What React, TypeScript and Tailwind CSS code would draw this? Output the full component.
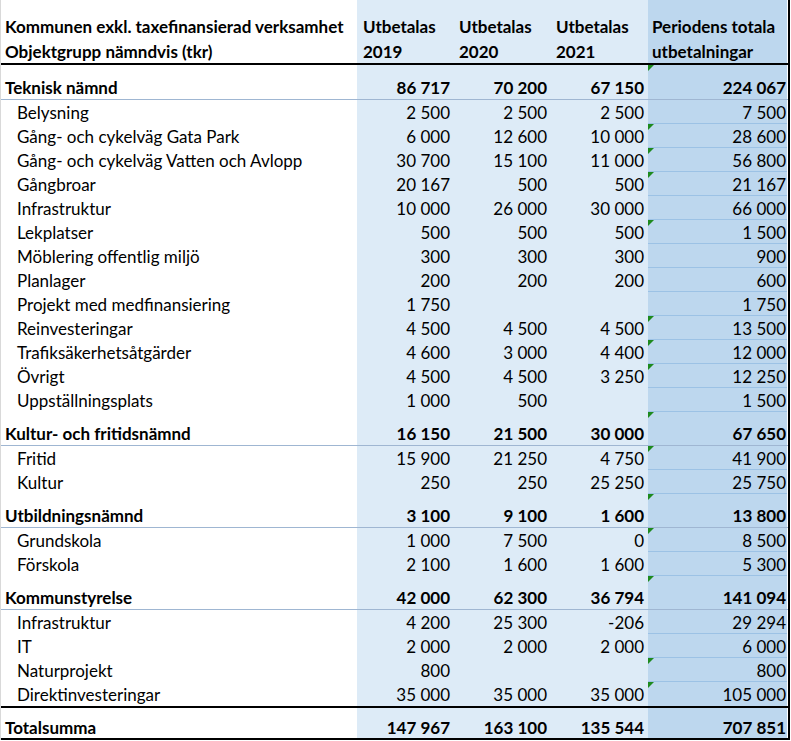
import React from "react";

type Item = { name: string; v: string[]; t?: boolean };
type Group = { name: string; v: string[]; spacerTri?: boolean; spacerH: string; items: Item[] };

const groups: Group[] = [
  {
    name: "Teknisk nämnd",
    v: ["86 717", "70 200", "67 150", "224 067"],
    spacerTri: true,
    spacerH: "h-[11px]",
    items: [
      { name: "Belysning", v: ["2 500", "2 500", "2 500", "7 500"] },
      { name: "Gång- och cykelväg Gata Park", v: ["6 000", "12 600", "10 000", "28 600"], t: true },
      { name: "Gång- och cykelväg Vatten och Avlopp", v: ["30 700", "15 100", "11 000", "56 800"], t: true },
      { name: "Gångbroar", v: ["20 167", "500", "500", "21 167"], t: true },
      { name: "Infrastruktur", v: ["10 000", "26 000", "30 000", "66 000"] },
      { name: "Lekplatser", v: ["500", "500", "500", "1 500"], t: true },
      { name: "Möblering offentlig miljö", v: ["300", "300", "300", "900"] },
      { name: "Planlager", v: ["200", "200", "200", "600"] },
      { name: "Projekt med medfinansiering", v: ["1 750", "", "", "1 750"] },
      { name: "Reinvesteringar", v: ["4 500", "4 500", "4 500", "13 500"], t: true },
      { name: "Trafiksäkerhetsåtgärder", v: ["4 600", "3 000", "4 400", "12 000"], t: true },
      { name: "Övrigt", v: ["4 500", "4 500", "3 250", "12 250"], t: true },
      { name: "Uppställningsplats", v: ["1 000", "500", "", "1 500"] },
    ],
  },
  {
    name: "Kultur- och fritidsnämnd",
    v: ["16 150", "21 500", "30 000", "67 650"],
    spacerTri: true,
    spacerH: "h-[10px]",
    items: [
      { name: "Fritid", v: ["15 900", "21 250", "4 750", "41 900"], t: true },
      { name: "Kultur", v: ["250", "250", "25 250", "25 750"] },
    ],
  },
  {
    name: "Utbildningsnämnd",
    v: ["3 100", "9 100", "1 600", "13 800"],
    spacerTri: true,
    spacerH: "h-[10px]",
    items: [
      { name: "Grundskola", v: ["1 000", "7 500", "0", "8 500"], t: true },
      { name: "Förskola", v: ["2 100", "1 600", "1 600", "5 300"] },
    ],
  },
  {
    name: "Kommunstyrelse",
    v: ["42 000", "62 300", "36 794", "141 094"],
    spacerTri: true,
    spacerH: "h-[10px]",
    items: [
      { name: "Infrastruktur", v: ["4 200", "25 300", "-206", "29 294"] },
      { name: "IT", v: ["2 000", "2 000", "2 000", "6 000"] },
      { name: "Naturprojekt", v: ["800", "", "", "800"], t: true },
      { name: "Direktinvesteringar", v: ["35 000", "35 000", "35 000", "105 000"], t: true },
    ],
  },
];

function Tri() {
  return (
    <span className="absolute left-0 top-0 w-0 h-0 border-t-[6px] border-r-[6px] border-t-[#1e8a1e] border-r-transparent" />
  );
}

const C1 = "w-[356px] shrink-0";
const C2 = "w-[96px] shrink-0 bg-[#ddebf7] text-right pr-[3px]";
const C3 = "w-[97px] shrink-0 bg-[#ddebf7] text-right pr-[3px]";
const C4 = "w-[98px] shrink-0 bg-[#ddebf7] text-right pr-[4px]";
const C5 = "w-[139px] shrink-0 bg-[#bdd7ee] text-right pr-[1px] relative";

function Spacer({ h, tri }: { h: string; tri?: boolean }) {
  return (
    <div className={`flex ${h}`}>
      <div className={C1} />
      <div className={C2} />
      <div className={C3} />
      <div className={C4} />
      <div className={C5}>{tri && <Tri />}</div>
    </div>
  );
}

export default function App() {
  return (
    <div className="bg-white w-[791px] h-[741px] font-[Lato,sans-serif] text-[17px] text-black overflow-hidden">
      <div className="w-[790px] border-l border-l-[#d9d9d9] border-r-2 border-r-black">
        {/* header */}
        <div className="flex h-[65px] font-bold leading-[25px] border-b-2 border-b-black">
          <div className={`${C1} pt-[14px] pl-[4px]`}>
            <div>Kommunen exkl. taxefinansierad verksamhet</div>
            <div>Objektgrupp nämndvis (tkr)</div>
          </div>
          <div className="w-[96px] shrink-0 bg-[#ddebf7] pt-[14px] pl-[6px]">
            <div>Utbetalas</div>
            <div>2019</div>
          </div>
          <div className="w-[97px] shrink-0 bg-[#ddebf7] pt-[14px] pl-[6px]">
            <div>Utbetalas</div>
            <div>2020</div>
          </div>
          <div className="w-[98px] shrink-0 bg-[#ddebf7] pt-[14px] pl-[6px]">
            <div>Utbetalas</div>
            <div>2021</div>
          </div>
          <div className="w-[139px] shrink-0 bg-[#bdd7ee] pt-[14px] pl-[4px]">
            <div>Periodens totala</div>
            <div>utbetalningar</div>
          </div>
        </div>

        {groups.map((g) => (
          <React.Fragment key={g.name}>
            <Spacer h={g.spacerH} tri={g.spacerTri} />
            <div className="flex h-[24px] leading-[20px] font-bold border-b border-b-[#9fb6d2]">
              <div className={`${C1} pl-[4px] pt-[2px]`}>{g.name}</div>
              <div className={`${C2} pt-[2px]`}>{g.v[0]}</div>
              <div className={`${C3} pt-[2px]`}>{g.v[1]}</div>
              <div className={`${C4} pt-[2px]`}>{g.v[2]}</div>
              <div className={`${C5} pt-[2px]`}>{g.v[3]}</div>
            </div>
            {g.items.map((it, i) => {
              const last = i === g.items.length - 1;
              const finalRow = last && g.name === "Kommunstyrelse";
              return (
                <div key={it.name + i} className="flex h-[24px] leading-[21px]">
                  <div className={`${C1} pl-[16px] pt-[2px]`}>{it.name}</div>
                  <div className={`${C2} pt-[2px]`}>{it.v[0]}</div>
                  <div className={`${C3} pt-[2px]`}>{it.v[1]}</div>
                  <div className={`${C4} pt-[2px]`}>{it.v[2]}</div>
                  <div
                    className={`${C5} pt-[2px] ${finalRow ? "" : "border-b border-b-[#9cc2e5]"}`}
                  >
                    {it.t && <Tri />}
                    {it.v[3]}
                  </div>
                </div>
              );
            })}
          </React.Fragment>
        ))}

        {/* total */}
        <div className="border-t-2 border-t-black border-b-2 border-b-black">
          <Spacer h="h-[8px]" />
          <div className="flex h-[22px] leading-[20px] font-bold">
            <div className={`${C1} pl-[4px] pt-[2px]`}>Totalsumma</div>
            <div className={`${C2} pt-[2px]`}>147 967</div>
            <div className={`${C3} pt-[2px]`}>163 100</div>
            <div className={`${C4} pt-[2px]`}>135 544</div>
            <div className={`${C5} pt-[2px]`}>707 851</div>
          </div>
        </div>
      </div>
    </div>
  );
}
